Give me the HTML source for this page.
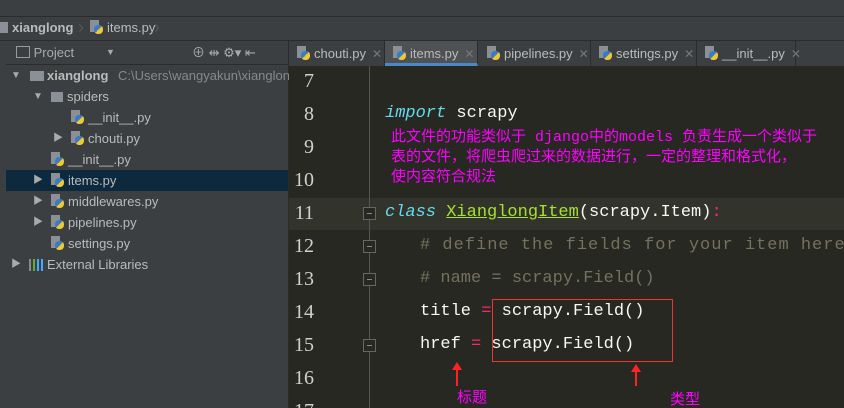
<!DOCTYPE html>
<html><head><meta charset="utf-8"><style>
html,body{margin:0;width:844px;height:408px;overflow:hidden}
body{background:#3c3f41;font-family:"Liberation Sans","Noto Sans CJK SC",sans-serif;position:relative}
.abs{position:absolute}
.tb{left:0;top:0;width:844px;height:16px;background:#3c3f41;border-bottom:1px solid #2b2b2b}
.nav{left:0;top:17px;width:844px;height:23px;background:#3c3f41;border-bottom:1px solid #2b2b2b;color:#bbb;font-size:13px}
.side{left:6px;top:41px;width:282px;height:367px;background:#3c3f41;border-right:1px solid #2b2b2b}
.strip{left:0;top:41px;width:6px;height:367px;background:#3c3f41;border-right:1px solid #2b2b2b}
.row{position:absolute;left:0;width:282px;height:21px;font-size:13px;color:#bbbbbb;line-height:21px;white-space:nowrap}
.ic{display:inline-block;width:13px;height:14px;vertical-align:-2px;margin-right:4px;position:relative}
.ic:before{content:"";position:absolute;left:0;top:0;width:9px;height:12px;background:#8a9096}
.ic:after{content:"";position:absolute;left:4px;top:5px;width:9px;height:9px;border-radius:4px;background:linear-gradient(135deg,#3b7bbf 50%,#f2c832 50%)}
.tri{position:absolute;color:#aaa;font-size:10px}
.tabs{left:289px;top:41px;width:555px;height:25px;background:#3c3f41;border-bottom:1px solid #2b2b2b}
.tab{position:absolute;top:0;height:25px;line-height:25px;font-size:13px;color:#bbb;border-right:1px solid #2b2b2b;padding-left:8px;white-space:nowrap}
.tab .x{color:#777;margin-left:6px;font-size:12px}
.ed{left:289px;top:66px;width:555px;height:342px;background:#272822;overflow:hidden}
.ln{position:absolute;left:0;width:25px;text-align:right;font-family:"Liberation Serif",serif;font-size:20px;color:#d0d0d0}
.code{position:absolute;font-family:"Liberation Mono",monospace;font-size:17px;color:#f8f8f2;white-space:pre}
.cm{position:absolute;left:102px;color:#ff00ff;font-size:15px;line-height:20px;font-family:"Liberation Mono","Noto Sans CJK SC",monospace;white-space:nowrap}
.fold{position:absolute;left:74px;width:13px;height:13px;border:1px solid #666;background:#272822;box-sizing:border-box}
.fold:after{content:"";position:absolute;left:3px;top:5px;width:5px;height:1px;background:#888}
</style></head><body>
<div class="abs tb"></div>
<div class="abs nav"><span class="abs" style="left:0;top:5px;width:8px;height:11px;background:#8a9096"></span><b class="abs" style="left:12px;top:3px">xianglong</b><span class="abs" style="left:78px;top:0;color:#555;font-size:18px">›</span><span class="abs" style="left:90px;top:3px"><span class="ic"></span>items.py</span><span class="abs" style="left:154px;top:0;color:#555;font-size:18px">›</span></div>
<div class="abs strip"></div>
<div class="abs side">
 <div class="row" style="top:0;height:23px;border-bottom:1px solid #2b2b2b;line-height:23px"><span style="margin-left:10px;display:inline-block;width:12px;height:10px;border:1px solid #999;vertical-align:-1px"></span> <span style="color:#aaa">Project</span><span style="position:absolute;left:100px;color:#aaa;font-size:9px">▼</span><span style="position:absolute;left:186px;color:#aaa">⊕ ⇹ ⚙▾ ⇤</span></div>
 <div class="row" style="top:24px"><span class="tri" style="left:5px">▼</span><span style="position:absolute;left:24px;top:6px;width:14px;height:10px;background:#8a9096"></span><b style="position:absolute;left:41px">xianglong</b><span style="position:absolute;left:112px;color:#888">C:\Users\wangyakun\xianglon</span></div>
 <div class="row" style="top:45px"><span class="tri" style="left:27px">▼</span><span style="position:absolute;left:45px;top:6px;width:12px;height:10px;background:#8a9096"></span><span style="position:absolute;left:61px">spiders</span></div>
 <div class="row" style="top:66px"><span style="position:absolute;left:65px"><span class="ic"></span>__init__.py</span></div>
 <div class="row" style="top:87px"><span class="tri" style="left:47px">▶</span><span style="position:absolute;left:65px"><span class="ic"></span>chouti.py</span></div>
 <div class="row" style="top:108px"><span style="position:absolute;left:45px"><span class="ic"></span>__init__.py</span></div>
 <div class="row" style="top:129px;background:#0d293e"><span class="tri" style="left:27px">▶</span><span style="position:absolute;left:45px"><span class="ic"></span>items.py</span></div>
 <div class="row" style="top:150px"><span class="tri" style="left:27px">▶</span><span style="position:absolute;left:45px"><span class="ic"></span>middlewares.py</span></div>
 <div class="row" style="top:171px"><span class="tri" style="left:27px">▶</span><span style="position:absolute;left:45px"><span class="ic"></span>pipelines.py</span></div>
 <div class="row" style="top:192px"><span style="position:absolute;left:45px"><span class="ic"></span>settings.py</span></div>
 <div class="row" style="top:213px"><span class="tri" style="left:5px">▶</span><span style="position:absolute;left:23px;top:5px;width:14px;height:12px;background:linear-gradient(90deg,#888 0 2px,transparent 2px 4px,#6a3 4px 6px,transparent 6px 8px,#4af 8px 10px,transparent 10px 12px,#4af 12px 14px)"></span><span style="position:absolute;left:41px">External Libraries</span></div>
</div>
<div class="abs tabs">
 <div class="tab" style="left:0;width:87px"><span class="ic"></span>chouti.py<span class="x">✕</span></div>
 <div class="tab" style="left:96px;width:84px;background:#4e5254;border-bottom:3px solid #4a88c7;height:22px"><span class="ic"></span>items.py<span class="x">✕</span></div>
 <div class="tab" style="left:190px;width:103px"><span class="ic"></span>pipelines.py<span class="x">✕</span></div>
 <div class="tab" style="left:302px;width:97px"><span class="ic"></span>settings.py<span class="x">✕</span></div>
 <div class="tab" style="left:408px;width:90px"><span class="ic"></span>__init__.py<span class="x">✕</span></div>
</div>
<div class="abs ed">
 <div class="abs" style="left:0;top:132px;width:555px;height:32px;background:#32332b"></div>
 <div class="abs" style="left:80px;top:0;width:1px;height:342px;background:#555"></div>
 <div class="fold" style="top:141px"></div><div class="fold" style="top:174px"></div><div class="fold" style="top:207px"></div><div class="fold" style="top:273px"></div>
 <div class="ln" style="top:4px">7</div><div class="ln" style="top:37px">8</div><div class="ln" style="top:70px">9</div><div class="ln" style="top:103px">10</div><div class="ln" style="top:136px">11</div><div class="ln" style="top:169px">12</div><div class="ln" style="top:202px">13</div><div class="ln" style="top:235px">14</div><div class="ln" style="top:268px">15</div><div class="ln" style="top:301px">16</div><div class="ln" style="top:334px">17</div>
 <div class="code" style="left:96px;top:38px"><i style="color:#66d9ef">import</i> scrapy</div>
 <div class="cm" style="top:62px">此文件的功能类似于 django中的models  负责生成一个类似于<br>表的文件，将爬虫爬过来的数据进行，一定的整理和格式化，<br>使内容符合规法</div>
 <div class="code" style="left:96px;top:137px"><i style="color:#66d9ef">class</i> <span style="color:#a6e22e;text-decoration:underline">XianglongItem</span>(scrapy.Item)<span style="color:#f92672">:</span></div>
 <div class="code" style="left:131px;top:170px;color:#75715e;letter-spacing:1px"># define the fields for your item here</div>
 <div class="code" style="left:131px;top:203px;color:#75715e"># name = scrapy.Field()</div>
 <div class="code" style="left:131px;top:236px">title <span style="color:#f92672">=</span> scrapy.Field()</div>
 <div class="code" style="left:131px;top:269px">href <span style="color:#f92672">=</span> scrapy.Field()</div>
 <div class="abs" style="left:203px;top:233px;width:179px;height:61px;border:1px solid #e33"></div>
 <div class="abs" style="left:167px;top:300px;width:2px;height:20px;background:#f22"></div><div class="abs" style="left:163px;top:296px;border:5px solid transparent;border-bottom:8px solid #f22;border-top:0"></div>
 <div class="abs" style="left:346px;top:302px;width:2px;height:18px;background:#f22"></div><div class="abs" style="left:342px;top:298px;border:5px solid transparent;border-bottom:8px solid #f22;border-top:0"></div>
 <div class="abs" style="left:168px;top:320px;color:#ff00ff;font-size:15px">标题</div>
 <div class="abs" style="left:381px;top:322px;color:#ff00ff;font-size:15px">类型</div>
</div>
</body></html>
